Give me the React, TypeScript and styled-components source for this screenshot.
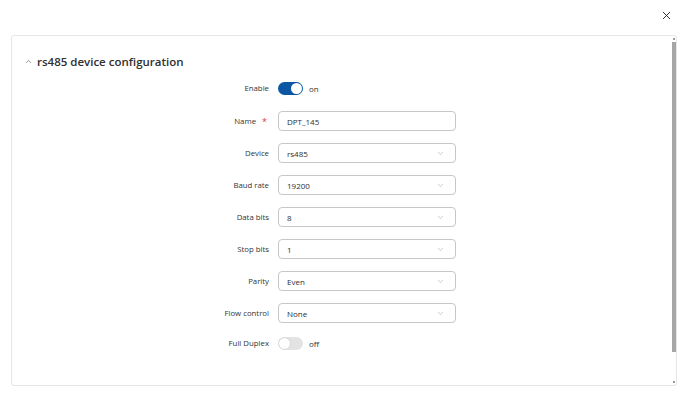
import React from 'react';
import styled, { createGlobalStyle } from 'styled-components';
import { ChevronDown, ChevronUp, X } from 'lucide-react';

const GlobalStyle = createGlobalStyle`
  html, body {
    margin: 0;
    padding: 0;
    background: #ffffff;
    font-family: "Open Sans", "Liberation Sans", sans-serif;
  }
  * { box-sizing: border-box; }
`;

const Page = styled.div`
  width: 690px;
  height: 397px;
  display: flex;
  flex-direction: column;
  background: #fff;
  overflow: hidden;
`;

const Header = styled.div`
  height: 35px;
  display: flex;
  justify-content: flex-end;
  align-items: flex-start;
  padding: 9px 17px 0 0;
`;

const CloseButton = styled.button`
  border: none;
  background: none;
  padding: 0;
  width: 13px;
  height: 13px;
  display: flex;
  color: #222;
  cursor: pointer;
`;

const Card = styled.div`
  position: relative;
  margin: 0 13px 0 11px;
  height: 351px;
  border: 1px solid #e6e6e6;
  border-radius: 3px;
  overflow: hidden;
`;

// drawn scrollbar, sits over the right edge of the card
const ScrollRail = styled.div`
  position: absolute;
  top: 0;
  right: 0;
  bottom: 0;
  width: 5px;
  display: flex;
  flex-direction: column;
  align-items: center;
`;

const ScrollArrow = styled.div`
  width: 2px;
  height: 2px;
  margin: 2px 0;
  background: #9a9a9a;
`;

const ScrollThumb = styled.div`
  width: 4px;
  height: 310px;
  background: #a6a6a6;
`;

const ScrollSpacer = styled.div`
  flex: 1;
`;

const CardInner = styled.div`
  padding: 18px 0 0 12px;
`;

const SectionTitle = styled.div`
  display: flex;
  align-items: center;
  gap: 4px;
  height: 15px;
  color: #2f2f2f;
  font-size: 11.5px;
  font-weight: 600;
  svg { color: #555; }
`;

const Form = styled.div`
  display: grid;
  grid-template-columns: 199px 178px;
  column-gap: 9px;
  row-gap: 12px;
  margin: 8px 0 0 46px;
`;

const Label = styled.div<{ $h: number }>`
  height: ${p => p.$h}px;
  display: flex;
  align-items: center;
  justify-content: flex-end;
  gap: 6px;
  font-size: 7.8px;
  color: #333;
`;

const Required = styled.span`
  color: #e0393e;
  font-size: 9px;
  margin-right: 2px;
`;

const Field = styled.div<{ $h: number }>`
  height: ${p => p.$h}px;
  display: flex;
  align-items: center;
`;

const Box = styled.div`
  width: 178px;
  height: 20px;
  border: 1px solid #c6c6c6;
  border-radius: 4px;
  display: flex;
  align-items: center;
  justify-content: space-between;
  padding: 0 10px 0 8px;
  font-size: 8px;
  color: #2e2e2e;
  svg { color: #a0a0a0; }
`;

const Track = styled.div<{ $on: boolean }>`
  width: 25px;
  height: 13px;
  border-radius: 7px;
  background: ${p => (p.$on ? '#0b57a4' : '#e3e3e3')};
  position: relative;
`;

const Knob = styled.div<{ $on: boolean }>`
  position: absolute;
  top: 1px;
  left: ${p => (p.$on ? '13px' : '1px')};
  width: 11px;
  height: 11px;
  border-radius: 50%;
  background: #fff;
  box-shadow: ${p => (p.$on ? 'none' : '0 0 0 0.5px #c8c8c8')};
`;

const SwitchText = styled.span`
  font-size: 8px;
  color: #333;
  margin-left: 6px;
`;

const Toggle: React.FC<{ on: boolean }> = ({ on }) => (
  <>
    <Track $on={on}>
      <Knob $on={on} />
    </Track>
    <SwitchText>{on ? 'on' : 'off'}</SwitchText>
  </>
);

type Row =
  | { label: string; kind: 'switch'; on: boolean; h: number }
  | { label: string; kind: 'text'; value: string; required?: boolean }
  | { label: string; kind: 'select'; value: string };

const rows: Row[] = [
  { label: 'Enable', kind: 'switch', on: true, h: 22 },
  { label: 'Name', kind: 'text', value: 'DPT_145', required: true },
  { label: 'Device', kind: 'select', value: 'rs485' },
  { label: 'Baud rate', kind: 'select', value: '19200' },
  { label: 'Data bits', kind: 'select', value: '8' },
  { label: 'Stop bits', kind: 'select', value: '1' },
  { label: 'Parity', kind: 'select', value: 'Even' },
  { label: 'Flow control', kind: 'select', value: 'None' },
  { label: 'Full Duplex', kind: 'switch', on: false, h: 16 },
];

const App: React.FC = () => {
  return (
    <Page>
      <GlobalStyle />
      <Header>
        <CloseButton aria-label="close">
          <X size={13} strokeWidth={1.7} />
        </CloseButton>
      </Header>
      <Card>
        <CardInner>
          <SectionTitle>
            <ChevronUp size={9} strokeWidth={1.6} />
            rs485 device configuration
          </SectionTitle>
          <Form>
            {rows.map(row => {
              const h = row.kind === 'switch' ? row.h : 20;
              return (
                <React.Fragment key={row.label}>
                  <Label $h={h}>
                    {row.label}
                    {row.kind === 'text' && row.required && <Required>*</Required>}
                  </Label>
                  <Field $h={h}>
                    {row.kind === 'switch' && <Toggle on={row.on} />}
                    {row.kind === 'text' && <Box>{row.value}</Box>}
                    {row.kind === 'select' && (
                      <Box>
                        {row.value}
                        <ChevronDown size={9} strokeWidth={1.4} />
                      </Box>
                    )}
                  </Field>
                </React.Fragment>
              );
            })}
          </Form>
        </CardInner>
        <ScrollRail>
          <ScrollArrow />
          <ScrollThumb />
          <ScrollSpacer />
          <ScrollArrow />
        </ScrollRail>
      </Card>
    </Page>
  );
};

export default App;
